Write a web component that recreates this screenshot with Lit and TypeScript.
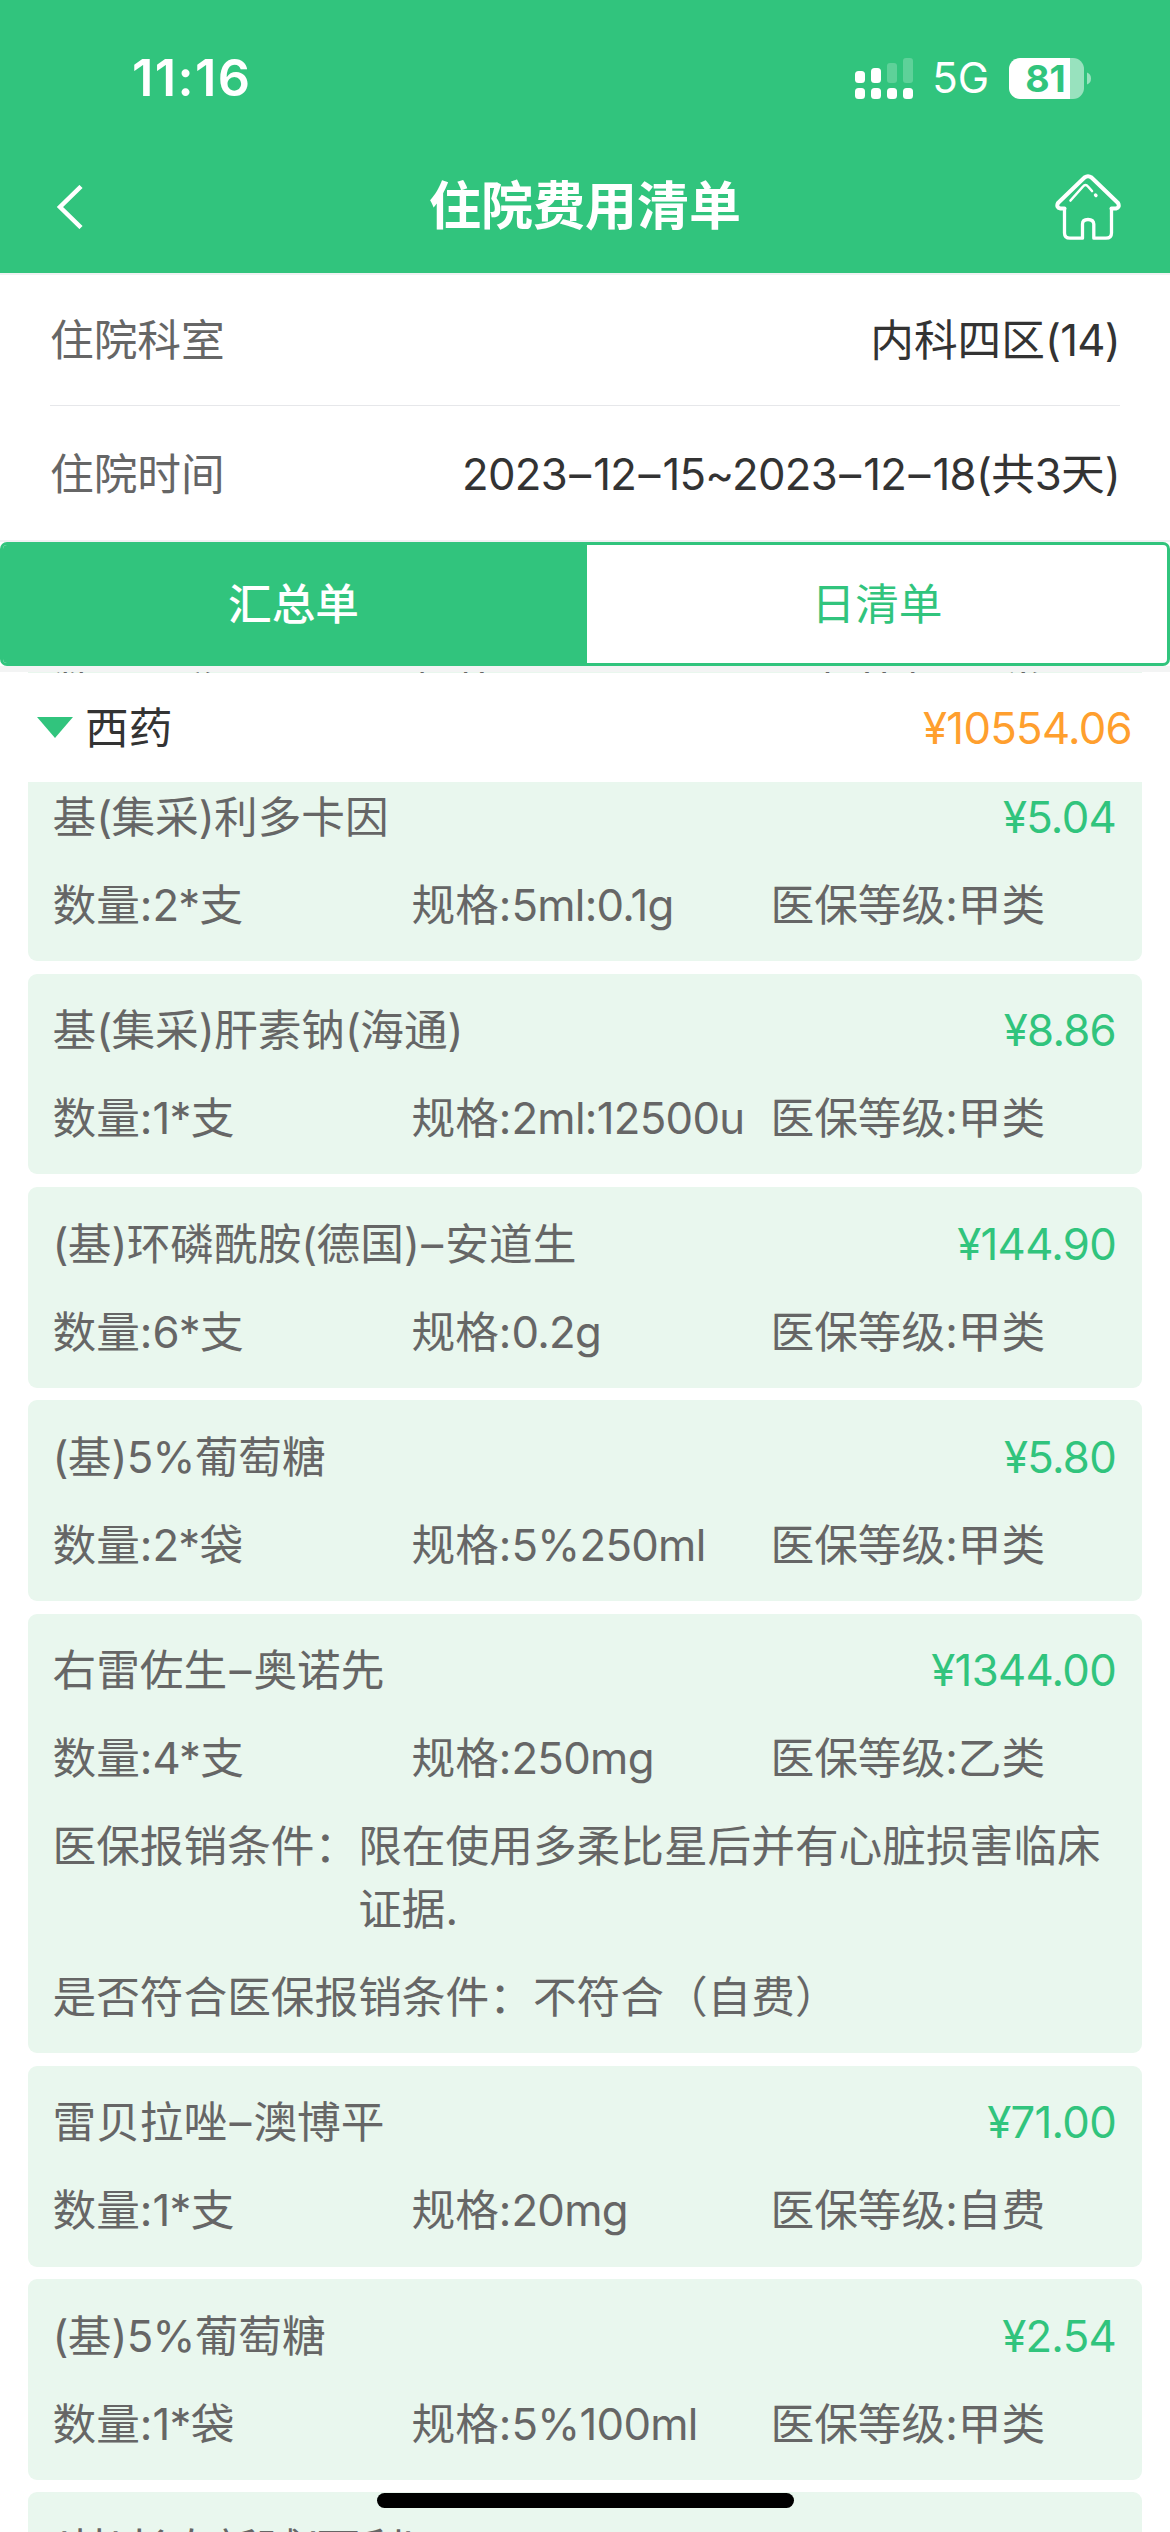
import { LitElement, html, css, svg, nothing } from "lit";
import { customElement, property } from "lit/decorators.js";

interface Drug {
  name?: string;
  price?: string;
  qty?: string;
  spec?: string;
  grade?: string;
  condition?: string;
  matched?: string;
}

const drugs: Drug[] = [
  { name: "基(集采)利多卡因", price: "¥5.04", qty: "2*支", spec: "5ml:0.1g", grade: "甲类" },
  { name: "基(集采)肝素钠(海通)", price: "¥8.86", qty: "1*支", spec: "2ml:12500u", grade: "甲类" },
  { name: "(基)环磷酰胺(德国)–安道生", price: "¥144.90", qty: "6*支", spec: "0.2g", grade: "甲类" },
  { name: "(基)5%葡萄糖", price: "¥5.80", qty: "2*袋", spec: "5%250ml", grade: "甲类" },
  {
    name: "右雷佐生–奥诺先", price: "¥1344.00", qty: "4*支", spec: "250mg", grade: "乙类",
    condition: "限在使用多柔比星后并有心脏损害临床证据.", matched: "不符合（自费）",
  },
  { name: "雷贝拉唑–澳博平", price: "¥71.00", qty: "1*支", spec: "20mg", grade: "自费" },
  { name: "(基)5%葡萄糖", price: "¥2.54", qty: "1*袋", spec: "5%100ml", grade: "甲类" },
  { name: "(基)长春新碱(西利)" },
];

/* Latin runs are set a little tighter than Chinese ones, dashes a little looser. */
const mixed = (text: string) =>
  text.split(/(–|[\x21-\x7e¥]+)/).map((run) =>
    run === "–"
      ? html`<span class="dash">–</span>`
      : /^[\x21-\x7e¥]+$/.test(run)
        ? html`<span class="latin">${run}</span>`
        : run,
  );

const runStyles = css`
  .latin { letter-spacing: -0.7px; }
  .dash { margin: 0 2.200px; }
`;

@customElement("status-bar")
export class StatusBar extends LitElement {
  static styles = css`
    :host { display: flex; justify-content: space-between; height: 140px; padding: 16px 79px 0 132px; box-sizing: border-box; color: #fff; font-family: Inter, sans-serif; }
    .time { font-size: 50.500px; font-weight: 600; line-height: 124px; letter-spacing: 1.400px; }
    .right { display: flex; align-items: center; height: 124px; }
    .net { font-size: 42px; line-height: 42px; margin-left: 19px; }
    .cells, .battery { display: block; overflow: visible; }
    .battery { margin-left: 20px; }
    .level { font: 700 37.500px Inter, sans-serif; }
  `;
  render() {
    return html`
      <div class="time">11:16</div>
      <div class="right">
        <svg class="cells" width="58" height="41" viewBox="0 0 58 41" fill="#fff">
          <rect x="0" y="13" width="10" height="12" rx="3.5" />
          <rect x="16" y="10" width="10" height="15" rx="3.5" />
          <rect x="32" y="5" width="10" height="20" rx="3" opacity=".22" />
          <rect x="48" y="0" width="10" height="25" rx="3" opacity=".22" />
          ${[0, 16, 32, 48].map((x) => svg`<rect x=${x} y="30" width="10" height="11" rx="3.5" />`)}
        </svg>
        <div class="net">5G</div>
        <svg class="battery" width="82" height="41" viewBox="0 0 82 41">
          <path d="M61 0H64A11 11 0 0 1 75 11V30A11 11 0 0 1 64 41H61Z" fill="#fff" opacity=".5" />
          <path d="M11 0H61V41H11A11 11 0 0 1 0 30V11A11 11 0 0 1 11 0Z" fill="#fff" />
          <path d="M78 14.500Q82 16 82 20.500T78 26.500Z" fill="#fff" opacity=".5" />
          <text class="level" x="36.500" y="34" text-anchor="middle" fill="#31c47d">81</text>
        </svg>
      </div>
    `;
  }
}

@customElement("nav-bar")
export class NavBar extends LitElement {
  static styles = css`
    :host { display: flex; justify-content: space-between; align-items: center; height: 133px; padding: 0 48px 0 56px; box-sizing: border-box; color: #fff; }
    .title { font-size: 52px; font-weight: 700; line-height: 60px; }
    .icon { display: block; }
    .side { display: flex; width: 67px; }
    .back { width: 59px; }
  `;
  render() {
    return html`
      <div class="side back">
        <svg class="icon" width="28" height="44" viewBox="0 0 28 44" fill="none" stroke="#fff" stroke-width="4.500">
          <path d="M25 1.500L4 22L25 42.500" />
        </svg>
      </div>
      <div class="title">住院费用清单</div>
      <div class="side">
        <svg class="icon" width="66" height="66" viewBox="0 0 66 66" fill="none" stroke="#fff" stroke-width="3.300" stroke-linecap="round" stroke-linejoin="round">
          <path stroke-width="4" d="M9.500 34.500H5.500Q.8 33.500 3 29L29.500 3.500Q33 1 36.500 3.500L63 29Q65.200 33.500 61 34.500H56.500" />
          <path stroke-linecap="butt" d="M9.500 34V59Q9.500 64.200 15 64.200H27.500V50Q27.500 45.500 33 45.500T38.800 50V64.200H51Q56.500 64.200 56.500 59V34" />
          <path stroke-width="2.600" d="M15.500 26.500L28 12.500Q30.500 9.500 33 12.500L37 17" />
          <path d="M40.500 21L41 21.500" />
        </svg>
      </div>
    `;
  }
}

@customElement("drug-card")
export class DrugCard extends LitElement {
  @property({ attribute: false }) drug!: Drug;
  static styles = [
    runStyles,
    css`
      :host { display: flex; flex-direction: column; flex: none; gap: 24.960px; padding: 25.700px 26px 24.220px 24.500px; margin: 0 28px; border-radius: 9px; background: #e9f7ee; color: #666; line-height: 63px; }
      .head { display: flex; justify-content: space-between; }
      .price { color: #31c47d; }
      .cols { display: grid; grid-template-columns: 359px 359px 1fr; white-space: nowrap; }
      .cond { display: flex; }
      .key { flex: none; }
    `,
  ];
  render() {
    const d = this.drug;
    return html`
      ${d.name
        ? html`<div class="head"><span>${mixed(d.name)}</span>${d.price ? html`<span class="price">${mixed(d.price)}</span>` : nothing}</div>`
        : nothing}
      ${d.qty
        ? html`<div class="cols"><span>数量:${mixed(d.qty)}</span><span>规格:${mixed(d.spec ?? "")}</span><span>医保等级:${d.grade}</span></div>`
        : nothing}
      ${d.condition
        ? html`<div class="cond"><span class="key">医保报销条件：</span><span>${d.condition}</span></div>
            <div class="cond"><span class="key">是否符合医保报销条件：</span><span>${d.matched}</span></div>`
        : nothing}
    `;
  }
}

@customElement("app-root")
export class AppRoot extends LitElement {
  static styles = [
    runStyles,
    css`
      :host { display: flex; flex-direction: column; position: relative; width: 1170px; height: 2532px; overflow: hidden; background: #fff; font-family: Inter, "Noto Sans CJK SC", sans-serif; font-size: 43.680px; line-height: 63px; color: #333; }
      .top { flex: none; background: #31c47d; }
      .info { flex: none; border-top: 2px solid #f0f2f3; border-bottom: 2px solid #f0f1f3; padding: 0 50px; }
      .row { display: flex; justify-content: space-between; align-items: center; height: 130px; box-sizing: border-box; }
      .row + .row { border-top: 1px solid #e6e7ea; height: 135px; padding-top: 3px; }
      .label { color: #666; }
      .tabs { flex: none; display: flex; height: 124px; box-sizing: border-box; border: 3px solid #31c47d; border-radius: 7px; overflow: hidden; }
      .tab { flex: 1; display: flex; align-items: center; justify-content: center; color: #31c47d; }
      .active { flex: none; width: 584px; box-sizing: border-box; padding-right: 3px; background: #31c47d; color: #fff; font-weight: 500; }
      .gap { flex: none; height: 6px; background: #f3f4f4; }
      .peek { flex: none; display: flex; flex-direction: column; height: 1px; overflow: hidden; }
      .peek drug-card { margin-top: -36.700px; }
      .group { flex: none; display: flex; align-items: center; height: 109px; padding: 0 38px 0 37px; box-sizing: border-box; }
      .arrow { width: 36px; height: 21px; margin-right: 12px; background: #31c47d; clip-path: polygon(0 0, 100% 0, 50% 100%); }
      .sum { margin-left: auto; color: #ff9f2e; }
      .group > span { padding-top: 2px; }
      .list { flex: 1; min-height: 0; overflow: hidden; display: flex; flex-direction: column; gap: 12.480px; }
      .list drug-card:first-child { margin-top: -21.800px; }
      .home { position: absolute; left: 377px; bottom: 24px; width: 417px; height: 15px; border-radius: 8px; background: #000; }
    `,
  ];
  private peeked: Drug = { qty: "1*瓶", spec: "5%100ml", grade: "甲类" };
  render() {
    return html`
      <div class="top"><status-bar></status-bar><nav-bar></nav-bar></div>
      <div class="info">
        <div class="row"><span class="label">住院科室</span><span>${mixed("内科四区(14)")}</span></div>
        <div class="row"><span class="label">住院时间</span><span>${mixed("2023–12–15~2023–12–18(共3天)")}</span></div>
      </div>
      <div class="tabs"><div class="tab active">汇总单</div><div class="tab">日清单</div></div>
      <div class="gap"></div>
      <div class="peek"><drug-card .drug=${this.peeked}></drug-card></div>
      <div class="group"><div class="arrow"></div><span>西药</span><span class="sum">${mixed("¥10554.06")}</span></div>
      <div class="list">${drugs.map((d) => html`<drug-card .drug=${d}></drug-card>`)}</div>
      <div class="home"></div>
    `;
  }
}
